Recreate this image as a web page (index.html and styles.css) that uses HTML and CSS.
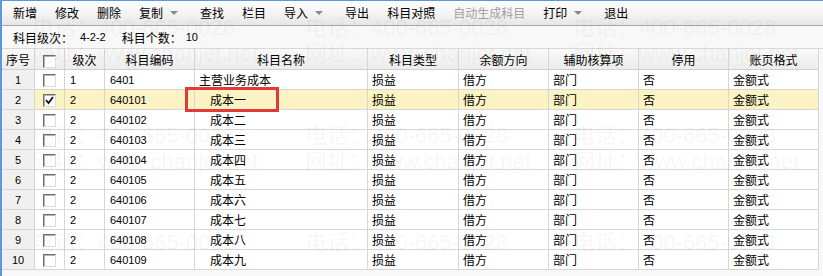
FILE: index.html
```html
<!DOCTYPE html>
<html>
<head>
<meta charset="utf-8">
<link rel="stylesheet" href="styles.css">
</head>
<body>
<div class="app">
  <div class="toolbar">
    <span class="tb">新增</span>
    <span class="tb">修改</span>
    <span class="tb">删除</span>
    <span class="tb">复制<i class="arrow"></i></span>
    <span class="tb">查找</span>
    <span class="tb">栏目</span>
    <span class="tb">导入<i class="arrow"></i></span>
    <span class="tb">导出</span>
    <span class="tb">科目对照</span>
    <span class="tb disabled">自动生成科目</span>
    <span class="tb">打印<i class="arrow"></i></span>
    <span class="tb">退出</span>
  </div>
  <div class="info">
    <span>科目级次：</span><span class="num val1">4-2-2</span><span>科目个数：</span><span class="num val2">10</span>
  </div>
  <div class="grid">
    <div class="row head">
      <div class="c idx">序号</div>
      <div class="c chk"><span class="box hbox"></span></div>
      <div class="c ctr">级次</div>
      <div class="c ctr">科目编码</div>
      <div class="c ctr">科目名称</div>
      <div class="c ctr">科目类型</div>
      <div class="c ctr">余额方向</div>
      <div class="c ctr">辅助核算项</div>
      <div class="c ctr">停用</div>
      <div class="c ctr">账页格式</div>
    </div>
    <div class="row">
      <div class="c idx num">1</div><div class="c chk"><span class="box"></span></div>
      <div class="c num">1</div><div class="c num">6401</div><div class="c">主营业务成本</div>
      <div class="c">损益</div><div class="c">借方</div><div class="c">部门</div><div class="c">否</div><div class="c">金额式</div>
    </div>
    <div class="row sel">
      <div class="c idx num">2</div><div class="c chk"><span class="box checked"><svg width="11" height="11" viewBox="0 0 11 11"><path d="M2 5 L4.5 8 L9 2" fill="none" stroke="#111" stroke-width="1.8"/></svg></span></div>
      <div class="c num">2</div><div class="c num">640101</div><div class="c sub">成本一</div>
      <div class="c">损益</div><div class="c">借方</div><div class="c">部门</div><div class="c">否</div><div class="c">金额式</div>
    </div>
    <div class="row">
      <div class="c idx num">3</div><div class="c chk"><span class="box"></span></div>
      <div class="c num">2</div><div class="c num">640102</div><div class="c sub">成本二</div>
      <div class="c">损益</div><div class="c">借方</div><div class="c">部门</div><div class="c">否</div><div class="c">金额式</div>
    </div>
    <div class="row">
      <div class="c idx num">4</div><div class="c chk"><span class="box"></span></div>
      <div class="c num">2</div><div class="c num">640103</div><div class="c sub">成本三</div>
      <div class="c">损益</div><div class="c">借方</div><div class="c">部门</div><div class="c">否</div><div class="c">金额式</div>
    </div>
    <div class="row">
      <div class="c idx num">5</div><div class="c chk"><span class="box"></span></div>
      <div class="c num">2</div><div class="c num">640104</div><div class="c sub">成本四</div>
      <div class="c">损益</div><div class="c">借方</div><div class="c">部门</div><div class="c">否</div><div class="c">金额式</div>
    </div>
    <div class="row">
      <div class="c idx num">6</div><div class="c chk"><span class="box"></span></div>
      <div class="c num">2</div><div class="c num">640105</div><div class="c sub">成本五</div>
      <div class="c">损益</div><div class="c">借方</div><div class="c">部门</div><div class="c">否</div><div class="c">金额式</div>
    </div>
    <div class="row">
      <div class="c idx num">7</div><div class="c chk"><span class="box"></span></div>
      <div class="c num">2</div><div class="c num">640106</div><div class="c sub">成本六</div>
      <div class="c">损益</div><div class="c">借方</div><div class="c">部门</div><div class="c">否</div><div class="c">金额式</div>
    </div>
    <div class="row">
      <div class="c idx num">8</div><div class="c chk"><span class="box"></span></div>
      <div class="c num">2</div><div class="c num">640107</div><div class="c sub">成本七</div>
      <div class="c">损益</div><div class="c">借方</div><div class="c">部门</div><div class="c">否</div><div class="c">金额式</div>
    </div>
    <div class="row">
      <div class="c idx num">9</div><div class="c chk"><span class="box"></span></div>
      <div class="c num">2</div><div class="c num">640108</div><div class="c sub">成本八</div>
      <div class="c">损益</div><div class="c">借方</div><div class="c">部门</div><div class="c">否</div><div class="c">金额式</div>
    </div>
    <div class="row">
      <div class="c idx num">10</div><div class="c chk"><span class="box"></span></div>
      <div class="c num">2</div><div class="c num">640109</div><div class="c sub">成本九</div>
      <div class="c">损益</div><div class="c">借方</div><div class="c">部门</div><div class="c">否</div><div class="c">金额式</div>
    </div>
  </div>
  <div class="redbox"></div>
  <div class="wm wm-a1">电话：400-665-0028</div>
  <div class="wm wm-a2">电话：400-665-0028</div>
  <div class="wm wm-a3">电话：400-665-0028</div>
  <div class="wm wm-b1">网址：www.chanjet.net</div>
  <div class="wm wm-b2">网址：www.chanjet.net</div>
  <div class="wm wm-b3">网址：www.chanjet.net</div>
  <div class="wm wm-c1">电话：400-665-0028</div>
  <div class="wm wm-c2">电话：400-665-0028</div>
  <div class="wm wm-c3">电话：400-665-0028</div>
  <div class="wm wm-d1">网址：www.chanjet.net</div>
  <div class="wm wm-d2">网址：www.chanjet.net</div>
  <div class="wm wm-d3">网址：www.chanjet.net</div>
  <div class="wm wm-e1">电话：400-665-0028</div>
  <div class="wm wm-e2">电话：400-665-0028</div>
  <div class="wm wm-e3">电话：400-665-0028</div>
</div>
</body>
</html>
```

FILE: styles.css
```css
html, body {
  margin: 0;
  padding: 0;
  background: #f8f8f8;
}
body {
  width: 823px;
  height: 276px;
  overflow: hidden;
  font-family: "Noto Sans CJK SC", "Liberation Sans", sans-serif;
  font-size: 12px;
  color: #000;
}
.app {
  position: relative;
  height: 275px;
  border-top: 1px solid #5a98d8;
  border-left: 2px solid #5a98d8;
  overflow: hidden;
}
.toolbar {
  height: 24px;
  display: flex;
  align-items: center;
  gap: 18px;
  padding-left: 11px;
  background: linear-gradient(#fdfdfd, #f4f4f4 50%, #e6e6e6);
  border-bottom: 1px solid #a8a8a8;
}
.tb {
  display: flex;
  align-items: center;
  line-height: 14px;
  white-space: nowrap;
}
.tb.disabled {
  color: #a0a0a0;
}
.arrow {
  display: inline-block;
  width: 0;
  height: 0;
  margin-left: 7px;
  margin-right: 4px;
  border-left: 4px solid transparent;
  border-right: 4px solid transparent;
  border-top: 4px solid #8a8a8a;
}
.info {
  height: 22px;
  display: flex;
  align-items: center;
  padding-left: 11px;
  background: #f8f8f8;
  border-bottom: 1px solid #d8d8d8;
}
.num {
  font-family: "Liberation Sans", "DejaVu Sans", sans-serif;
  font-size: 11px;
}
.val1 { margin-left: 7px; margin-right: 16px; }
.val2 { margin-left: 4px; }
.grid {
  width: 817px;
  display: flex;
  flex-direction: column;
  background: #fff;
}
.row {
  display: grid;
  grid-template-columns: 33px 30px 40px 90px 173px 91px 90px 90px 90px 90px;
  height: 20px;
  box-sizing: border-box;
  border-bottom: 1px solid #d6d6d6;
  background: #fff;
}
.row.head {
  height: 21px;
  background: linear-gradient(#f9f9f9, #ececec);
  border-bottom: 1px solid #d0d0d0;
}
.row.sel {
  background: #fbf3c3;
}
.c {
  box-sizing: border-box;
  border-right: 1px solid #d6d6d6;
  display: flex;
  align-items: center;
  padding-left: 4px;
  white-space: nowrap;
  overflow: hidden;
}
.c.num {
  padding-left: 5px;
}
.c.ctr {
  justify-content: center;
  padding-left: 0;
}
.c.sub {
  padding-left: 15px;
}
.c.idx {
  justify-content: center;
  padding-left: 0;
  background: #f0f0f0;
}
.head .c.idx {
  background: transparent;
}
.c.chk {
  justify-content: center;
  padding-left: 0;
  padding-right: 1px;
  padding-top: 2px;
}
.box {
  display: inline-flex;
  align-items: center;
  justify-content: center;
  width: 13px;
  height: 13px;
  box-sizing: border-box;
  background: #fff;
  border: 1px solid;
  border-color: #6e6e6e #dcdcdc #dcdcdc #6e6e6e;
  box-shadow: inset 1px 1px 0 #b4b4b4;
}
.hbox {
  margin-top: 3px;
}
.redbox {
  position: absolute;
  left: 183px;
  top: 86px;
  width: 94px;
  height: 25px;
  box-sizing: border-box;
  border: 3px solid #e23a36;
}
.wm {
  position: absolute;
  font-family: "Liberation Sans", "Noto Sans CJK SC", sans-serif;
  font-size: 22px;
  line-height: 22px;
  color: rgba(0, 0, 0, 0.055);
  white-space: nowrap;
  pointer-events: none;
}
.wm-a1 { left: 30px; top: 16px; }
.wm-a2 { left: 303px; top: 16px; }
.wm-a3 { left: 571px; top: 16px; }
.wm-b1 { left: 30px; top: 42px; }
.wm-b2 { left: 303px; top: 42px; }
.wm-b3 { left: 571px; top: 42px; }
.wm-c1 { left: 30px; top: 124px; }
.wm-c2 { left: 303px; top: 124px; }
.wm-c3 { left: 571px; top: 124px; }
.wm-d1 { left: 30px; top: 150px; }
.wm-d2 { left: 303px; top: 150px; }
.wm-d3 { left: 571px; top: 150px; }
.wm-e1 { left: 30px; top: 231px; }
.wm-e2 { left: 303px; top: 231px; }
.wm-e3 { left: 571px; top: 231px; }
```
